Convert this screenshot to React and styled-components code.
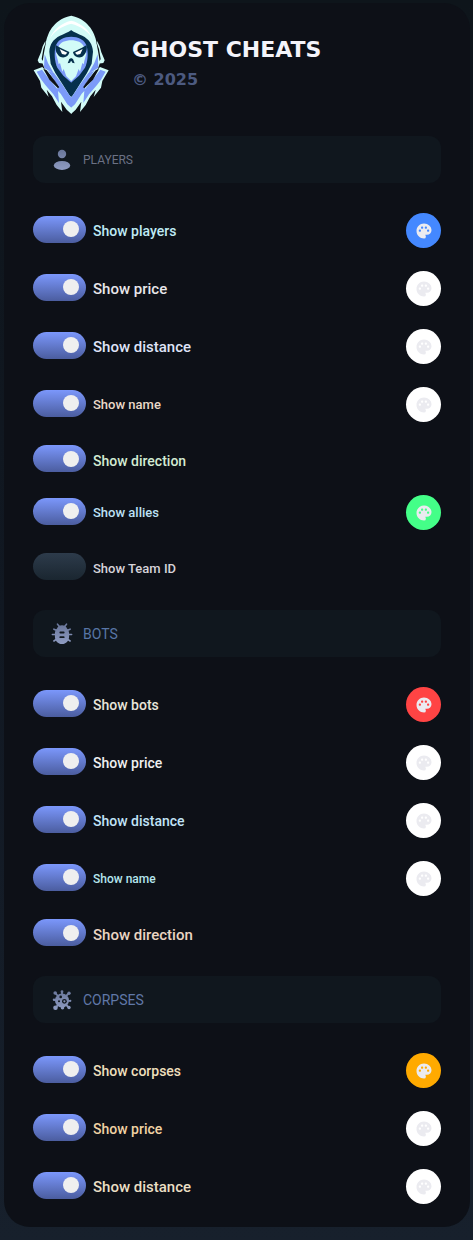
import { useState } from "react";
import styled, { createGlobalStyle } from "styled-components";
import { MdPalette } from "react-icons/md";

const GlobalStyle = createGlobalStyle`
  * {
    box-sizing: border-box;
  }

  body {
    margin: 0;
    min-height: 100vh;
    background: linear-gradient(180deg, #0e151b 0%, #111822 50%, #17202c 100%);
    font-family: Roboto, "Liberation Sans", sans-serif;
  }
`;

const Panel = styled.main`
  margin: 3px 3px 13px 4px;
  padding: 12px 29px 23px;
  border-radius: 26px;
  background: #0d1017;
`;

const Brand = styled.header`
  display: flex;
  align-items: center;
  gap: 23px;
  margin-bottom: 21px;
`;

const Logo = styled.svg`
  flex: none;
  width: 76px;
  height: 100px;
`;

const Title = styled.h1`
  margin: 0;
  color: #f4f4fa;
  font: 700 22px/30px "DejaVu Sans", sans-serif;
  text-transform: uppercase;
`;

const Copyright = styled.p`
  margin: 0;
  color: #4c5a80;
  font: 700 16px/30px "DejaVu Sans", sans-serif;
`;

const Section = styled.section`
  & + & {
    margin-top: 30px;
  }
`;

const sizes = { small: "12px", normal: "13px", medium: "14px", large: "15px" };

const SectionHeader = styled.div`
  display: flex;
  align-items: center;
  gap: 10px;
  height: 47px;
  margin-bottom: 30px;
  padding: 0 18px;
  border-radius: 12px;
  background: #10171e;

  svg {
    flex: none;
    width: 22px;
    height: 22px;
  }

  h2 {
    margin: 0;
    color: ${({ $color }) => $color};
    font-size: ${({ $size }) => sizes[$size]};
    font-weight: 400;
    line-height: 20px;
    text-transform: uppercase;
  }
`;

const Options = styled.ul`
  display: flex;
  flex-direction: column;
  gap: 23px;
  margin: 0;
  padding: 0;
  list-style: none;
`;

const Option = styled.li`
  display: flex;
  align-items: center;
  justify-content: space-between;
`;

const OptionLabel = styled.label`
  display: flex;
  align-items: center;
  gap: 7px;
  height: 27px;
  margin-bottom: ${({ $raised }) => ($raised ? "3px" : "0")};
  cursor: pointer;
`;

const Toggle = styled.input`
  appearance: none;
  flex: none;
  display: flex;
  align-items: center;
  justify-content: flex-end;
  width: 53px;
  height: 27px;
  margin: 0;
  padding: 0 7px;
  border-radius: 14px;
  background: linear-gradient(180deg, #2d3b4b, #1a2630);
  cursor: pointer;

  &:checked {
    background: linear-gradient(180deg, #7b97fb, #4b5d9f);
  }

  &:checked::before {
    content: "";
    width: 16px;
    height: 16px;
    border-radius: 50%;
    background: #efefef;
  }
`;

const OptionText = styled.span`
  padding-top: 4px;
  color: ${({ $color }) => $color};
  font-size: ${({ $size }) => sizes[$size]};
  font-weight: 500;
  line-height: 20px;
`;

const Swatch = styled.button`
  display: flex;
  align-items: center;
  justify-content: center;
  width: 35px;
  height: 35px;
  padding: 0;
  border: none;
  border-radius: 50%;
  background: ${({ $color }) => $color};
  color: #ebebf0;
  cursor: pointer;

  svg {
    width: 18px;
    height: 18px;
  }
`;

const IconGradient = ({ id }) => (
  <linearGradient id={id} gradientUnits="userSpaceOnUse" x1="0" y1="1" x2="0" y2="21">
    <stop offset="0" stopColor="#69769a" />
    <stop offset="1" stopColor="#8f9cc2" />
  </linearGradient>
);

const PersonIcon = () => (
  <svg viewBox="0 0 22 22" aria-hidden="true">
    <IconGradient id="person" />
    <g fill="url(#person)">
      <circle cx="11" cy="5" r="4.2" />
      <ellipse cx="11" cy="16.4" rx="8.2" ry="4.5" />
    </g>
  </svg>
);

const BugIcon = () => (
  <svg viewBox="0 0 22 22" aria-hidden="true">
    <IconGradient id="bug" />
    <path
      d="M6.500 1.200 8.800 4M15.500 1.200 13.200 4M2.900 6.200 6 7.600M19.100 6.200 16 7.600M1.400 11.500H5M20.600 11.500H17M2.900 18 6 15.800M19.100 18 16 15.800"
      fill="none"
      stroke="url(#bug)"
      strokeWidth="1.600"
      strokeLinecap="round"
    />
    <path
      fill="url(#bug)"
      fillRule="evenodd"
      d="M11 2.300c2.300 0 4.200 1.200 5 3.100 1.300 1.300 2.100 2.700 2.100 5v3c0 4.200-3.100 7.600-7.100 7.600s-7.100-3.400-7.100-7.600v-3c0-2.300.8-3.700 2.100-5 .8-1.900 2.700-3.100 5-3.100ZM9.300 8.600a.9.9 0 0 0 0 1.800h3.400a.9.9 0 0 0 0-1.800ZM9.300 13.300a.9.9 0 0 0 0 1.800h3.400a.9.9 0 0 0 0-1.800Z"
    />
  </svg>
);

const VirusIcon = () => (
  <svg viewBox="0 0 22 22" aria-hidden="true">
    <IconGradient id="virus" />
    <g fill="url(#virus)">
      <circle cx="11" cy="11.5" r="7" />
      <circle cx="11" cy="2.7" r="1.4" />
      <circle cx="4.2" cy="4" r="1.8" />
      <circle cx="18" cy="4.2" r="1.7" />
      <circle cx="3" cy="10.8" r="1.2" />
      <circle cx="19.3" cy="11.8" r="1.1" />
      <circle cx="4.5" cy="18.7" r="2.3" />
      <circle cx="18" cy="18.5" r="1.7" />
      <circle cx="11.5" cy="18.8" r="1.8" />
    </g>
    <path
      d="M11 3v3M4.200 4 8 8M18 4.200 14 8M3 10.800h3M16 11.800h3M4.500 18.700 8 15M18 18.500 14 15"
      fill="none"
      stroke="url(#virus)"
      strokeWidth="1.800"
    />
    <g fill="#10171e">
      <circle cx="9.700" cy="7.900" r="1.300" />
      <circle cx="8" cy="12.300" r="1" />
      <circle cx="13.400" cy="12.300" r="2.400" />
    </g>
    <circle cx="13.400" cy="12.300" r="1.100" fill="#8390b5" />
  </svg>
);

// One half of the mask; the other half is the same drawing mirrored at x = 123.5.
const GhostHalf = () => (
  <>
    <path
      fill="#d2fbf7"
      d="M124 16C116 17 104 21 94 27 76 38 62 54 55 72 48 88 46 104 42 122L38 160 44 176 84 220 124 264Z"
    />
    <path fill="#d2fbf7" d="M46 92 38 108 33 126 26 142 23 150 27 158 44 160Z" />
    <path fill="#0d1017" d="M48 94 40 116 35 146 38 152 43 122Z" />
    <path fill="#ffffff" d="M124 31C98 36 70 56 59 86 70 64 94 48 124 40Z" />
    <path fill="#7b9af8" d="M44 132 54 158 72 190 54 180 42 172Z" />
    <path
      fill="#06304c"
      d="M124 59C114 66 102 71 90 76 70 86 59 102 58 124L62 160 76 188 99 224 124 264Z"
    />
    <path
      fill="#d2fbf7"
      d="M11 180 37 170 62 198 96 240 124 260V311L110 298 93 274 97 305 80 284 66 258 50 238 56 260 34 232 30 212Z"
    />
    <path
      fill="#7b9af8"
      d="M20 184 36 178 54 202 82 236 84 222 104 240 124 262V292L112 282 92 250 84 242 87 278 70 252 46 224 34 208Z"
    />
    <path fill="#0d1017" d="M40 176 50 180 88 230 84 234 58 208Z" />
    <path fill="#7b9af8" d="M54 182 72 188 98 224 124 264 104 248 88 230Z" />
    <path
      fill="#7b9af8"
      d="M124 79C102 79 84 88 77 106 72 128 73 152 82 172L100 196 124 217Z"
    />
    <path
      fill="#d2fbf7"
      d="M124 90C106 90 90 96 85 110L78 130 84 152 86 162 90 158 97 184 101 176 109 198 124 213Z"
    />
    <path fill="#06304c" d="M77 104 91 112 118 125C116 138 103 145 90 139 80 132 75 120 77 104Z" />
    <path fill="#ffffff" d="M89 116 112 127 106 133 96 131Z" />
    <path fill="#06304c" d="M124 143 118 146 113 159 120 157 124 150Z" />
  </>
);

const GhostLogo = () => (
  <Logo viewBox="9 14 228 300" role="img" aria-label="Ghost Cheats">
    <GhostHalf />
    <g transform="translate(247 0) scale(-1 1)">
      <GhostHalf />
    </g>
  </Logo>
);

const sections = [
  {
    id: "players",
    title: "Players",
    titleColor: "#6b7184",
    titleSize: "small",
    Icon: PersonIcon,
    options: [
      { text: "Show players", size: "medium", color: "#bfeaf5", swatch: "#4488ff" },
      { text: "Show price", size: "large", color: "#e8e6ea", swatch: "#ffffff" },
      { text: "Show distance", size: "large", color: "#dfe3f7", swatch: "#ffffff" },
      { text: "Show name", size: "normal", color: "#ead9c8", swatch: "#ffffff" },
      { text: "Show direction", size: "medium", color: "#d3ebd3" },
      { text: "Show allies", size: "normal", color: "#bde0f5", swatch: "#44ff88" },
      { text: "Show Team ID", size: "normal", color: "#d6d3da", off: true },
    ],
  },
  {
    id: "bots",
    title: "Bots",
    titleColor: "#5876a6",
    titleSize: "medium",
    Icon: BugIcon,
    options: [
      { text: "Show bots", size: "medium", color: "#e8e5da", swatch: "#ff4444" },
      { text: "Show price", size: "medium", color: "#efeff0", swatch: "#ffffff" },
      { text: "Show distance", size: "medium", color: "#c1e3f7", swatch: "#ffffff" },
      { text: "Show name", size: "small", color: "#b5e6ee", swatch: "#ffffff" },
      { text: "Show direction", size: "large", color: "#ead5c3" },
    ],
  },
  {
    id: "corpses",
    title: "Corpses",
    titleColor: "#6078a8",
    titleSize: "medium",
    Icon: VirusIcon,
    options: [
      { text: "Show corpses", size: "medium", color: "#eddfbc", swatch: "#ffaa00" },
      { text: "Show price", size: "medium", color: "#f0d2a4", swatch: "#ffffff" },
      { text: "Show distance", size: "large", color: "#eadfc4", swatch: "#ffffff" },
    ],
  },
];

const ToggleOption = ({ text, size, color, swatch, off }) => {
  const [checked, setChecked] = useState(!off);

  return (
    <Option>
      <OptionLabel $raised={Boolean(swatch)}>
        <Toggle
          type="checkbox"
          checked={checked}
          onChange={(e) => setChecked(e.target.checked)}
        />
        <OptionText $size={size} $color={color}>
          {text}
        </OptionText>
      </OptionLabel>
      {swatch && (
        <Swatch type="button" $color={swatch} aria-label={`${text} color`}>
          <MdPalette />
        </Swatch>
      )}
    </Option>
  );
};

const App = () => {
  return (
    <>
      <GlobalStyle />
      <Panel>
        <Brand>
          <GhostLogo />
          <div>
            <Title>Ghost Cheats</Title>
            <Copyright>© 2025</Copyright>
          </div>
        </Brand>
        {sections.map(({ id, title, titleColor, titleSize, Icon, options }) => (
          <Section key={id}>
            <SectionHeader $color={titleColor} $size={titleSize}>
              <Icon />
              <h2>{title}</h2>
            </SectionHeader>
            <Options>
              {options.map((option) => (
                <ToggleOption key={option.text} {...option} />
              ))}
            </Options>
          </Section>
        ))}
      </Panel>
    </>
  );
};

export default App;
